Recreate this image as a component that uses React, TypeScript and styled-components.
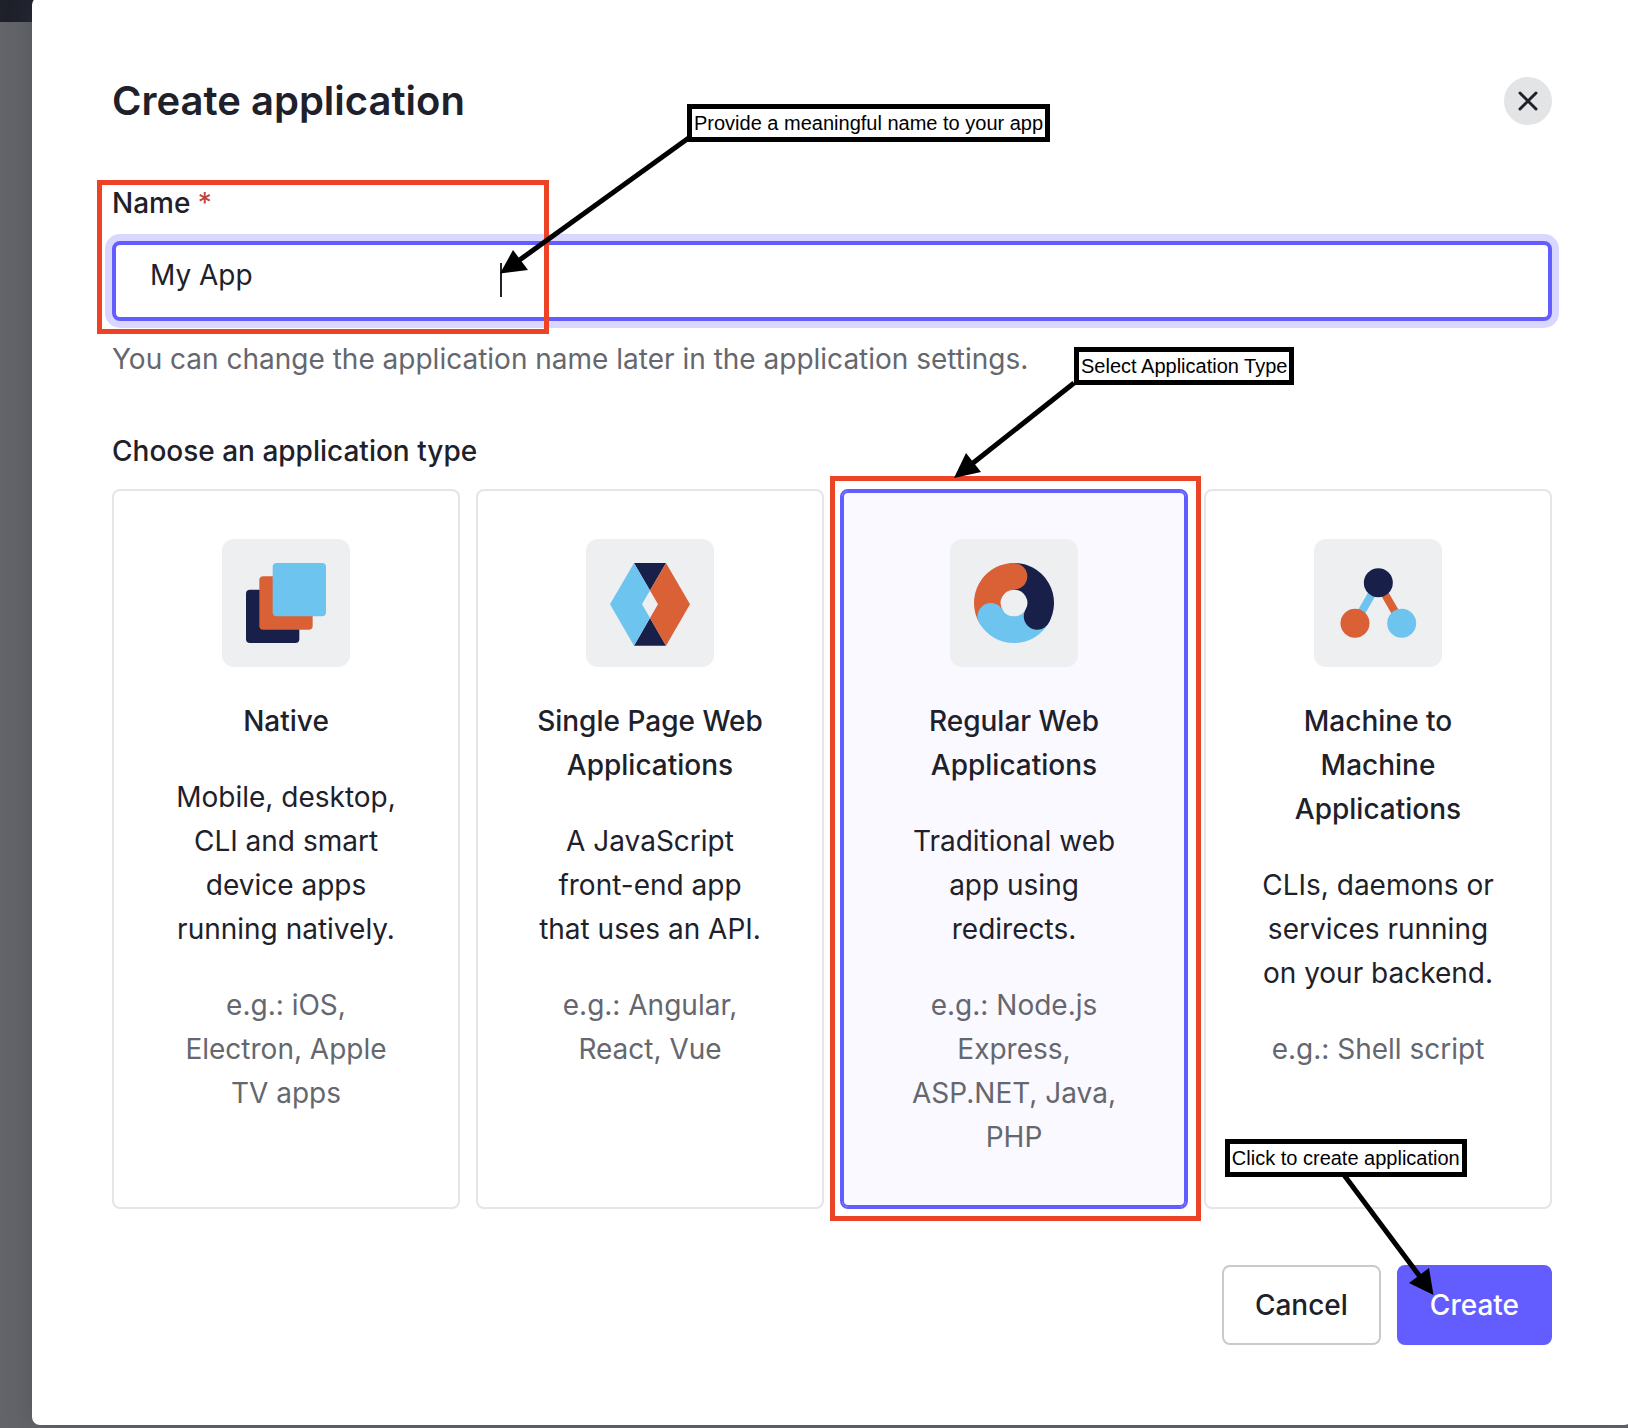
import { useId, useState } from "react";
import type { ReactNode } from "react";
import styled, { createGlobalStyle, css } from "styled-components";

const ink = "#1e212a";
const muted = "#65676e";
const primary = "#635dff";
const navy = "#18204a";
const orange = "#da6036";
const sky = "#6dc4ef";
const markRed = "#ec4226";

const GlobalStyle = createGlobalStyle`
  *, *::before, *::after { box-sizing: border-box; }
  body { margin: 0; background: #636469; }
  body, input, button {
    font-family: Inter, "Liberation Sans", sans-serif;
    font-size: 28px;
    line-height: 44px;
    font-optical-sizing: none;
    font-feature-settings: "calt" 0;
    color: ${ink};
  }
`;

const Page = styled.div`
  min-height: 100vh;
  padding: 0 0 3px 32px;
  overflow: hidden;
  background: linear-gradient(${ink} 22px, #636469 22px);
`;

const Dialog = styled.form`
  margin: -3px -4px 0 0;
  padding: 80px;
  border-radius: 8px;
  background: #fff;
  box-shadow: 0 0 24px rgba(60, 64, 80, 0.4);
`;

const Header = styled.header`
  display: flex;
  align-items: center;
  justify-content: space-between;
  height: 48px;
  margin-bottom: 56px;
`;

const Title = styled.h1`
  margin: 0;
  font-size: 40px;
  line-height: 48px;
  font-weight: 600;
`;

const CloseButton = styled.button`
  display: grid;
  place-items: center;
  width: 48px;
  height: 48px;
  padding: 0;
  border: 0;
  border-radius: 50%;
  background: #e3e4e6;
`;

const Field = styled.div`
  position: relative;
  display: flex;
  flex-direction: column;
  gap: 16px;
  margin-bottom: 48px;
`;

const FieldLabel = styled.label`
  font-weight: 500;
`;

const Required = styled.span`
  color: #c0433b;
  font-weight: 400;
`;

const TextInput = styled.input`
  width: 100%;
  height: 80px;
  padding: 0 32px 12px 34px;
  border: 4px solid ${primary};
  border-radius: 8px;
  outline: 0;
  background: #fff;
  box-shadow: 0 0 0 7px #d9d6ff;
`;

const Hint = styled.p`
  margin: 0;
  color: ${muted};
`;

const TypeGroup = styled.fieldset`
  min-width: 0;
  margin: 0 0 56px;
  padding: 0;
  border: 0;
`;

const Legend = styled.legend`
  padding: 0 0 16px;
  font-weight: 500;
`;

const TypeGrid = styled.div`
  display: grid;
  grid-template-columns: repeat(4, minmax(0, 1fr));
  gap: 16px;
`;

const TypeCard = styled.label<{ $selected: boolean }>`
  position: relative;
  display: flex;
  flex-direction: column;
  align-items: center;
  gap: 32px;
  padding: 48px 54px;
  border: 2px solid #e5e5e5;
  border-radius: 8px;
  text-align: center;
  ${({ $selected }) =>
    $selected &&
    css`
      border-color: ${primary};
      background: #faf9ff;
      box-shadow: inset 0 0 0 2px ${primary};
    `}
`;

const HiddenRadio = styled.input`
  position: absolute;
  width: 1px;
  height: 1px;
  margin: 0;
  opacity: 0;
`;

const IconTile = styled.span`
  display: block;
  width: 128px;
  height: 128px;
  border-radius: 12px;
  background: #eeeff1;
`;

const CardTitle = styled.span`
  font-weight: 500;
`;

const CardExamples = styled.span`
  color: ${muted};
`;

const Footer = styled.footer`
  display: flex;
  justify-content: flex-end;
  gap: 16px;
`;

const Button = styled.button<{ $primary?: boolean }>`
  height: 80px;
  padding: 0 31px;
  border: 2px solid ${({ $primary }) => ($primary ? primary : "#c9cace")};
  border-radius: 8px;
  background: ${({ $primary }) => ($primary ? primary : "#fff")};
  color: ${({ $primary }) => ($primary ? "#fff" : ink)};
  font-weight: 500;
`;

const ButtonAnchor = styled.div`
  position: relative;
`;

/* Tutorial notes drawn over the dialog */

const Frame = styled.span`
  position: absolute;
  border: 5px solid ${markRed};
  pointer-events: none;
`;

const NameFrame = styled(Frame)`
  top: -1px;
  left: -15px;
  width: 452px;
  height: 154px;
`;

const CardFrame = styled(Frame)`
  inset: -15px -15px -14px -12px;
`;

const Callout = styled.span<{ $left: number; $top: number }>`
  position: absolute;
  left: ${({ $left }) => $left}px;
  top: ${({ $top }) => $top}px;
  z-index: 2;
  padding: 0 2px;
  border: 5px solid #000;
  background: #fff;
  color: #000;
  font: 400 20px/28px "Liberation Sans", Arial, sans-serif;
  white-space: nowrap;
  pointer-events: none;
`;

const ArrowLayer = styled.svg<{ $left: number; $top: number }>`
  position: absolute;
  left: ${({ $left }) => $left}px;
  top: ${({ $top }) => $top}px;
  z-index: 1;
  overflow: visible;
  pointer-events: none;
`;

const Caret = styled.span`
  position: absolute;
  left: 388px;
  top: 82px;
  width: 2px;
  height: 34px;
  background: ${ink};
`;

type ArrowProps = { left: number; top: number; width: number; height: number; line: string; head: string };

function Arrow({ left, top, width, height, line, head }: ArrowProps) {
  return (
    <ArrowLayer $left={left} $top={top} width={width} height={height} aria-hidden="true">
      <path d={line} stroke="#000" strokeWidth="5" fill="none" />
      <path d={head} fill="#000" />
    </ArrowLayer>
  );
}

function NativeIcon() {
  return (
    <svg width="128" height="128" viewBox="0 0 128 128" aria-hidden="true">
      <rect x="24" y="50.67" width="53.33" height="53.33" rx="4" fill={navy} />
      <rect x="37.33" y="37.33" width="53.33" height="53.33" rx="4" fill={orange} />
      <rect x="50.67" y="24" width="53.33" height="53.33" rx="4" fill={sky} />
    </svg>
  );
}

function SinglePageIcon() {
  return (
    <svg width="128" height="128" viewBox="0 0 128 128" aria-hidden="true">
      <path d="M48 24H80L64 51.5ZM48 106.67H80L64 79Z" fill={navy} />
      <path d="M48 24L64 51.5L56 65.33L64 79L48 106.67L24 65.33Z" fill={sky} />
      <path d="M80 24L64 51.5L72 65.33L64 79L80 106.67L104 65.33Z" fill={orange} />
    </svg>
  );
}

function RegularWebIcon() {
  return (
    <svg width="128" height="128" viewBox="0 0 128 128" aria-hidden="true">
      <g fill="none" strokeWidth="26.67">
        <path d="M64 37.33A26.67 26.67 0 0 1 87.1 77.33" stroke={navy} />
        <path d="M87.1 77.33A26.67 26.67 0 0 1 40.9 77.33" stroke={sky} />
        <path d="M40.9 77.33A26.67 26.67 0 0 1 64 37.33" stroke={orange} />
      </g>
      <circle cx="64" cy="37.33" r="13.33" fill={orange} />
      <circle cx="87.1" cy="77.33" r="13.33" fill={navy} />
      <circle cx="40.9" cy="77.33" r="13.33" fill={sky} />
    </svg>
  );
}

function MachineIcon() {
  return (
    <svg width="128" height="128" viewBox="0 0 128 128" aria-hidden="true">
      <path d="M64.33 43.67L41 84.33" stroke={sky} strokeWidth="8" />
      <path d="M64.33 43.67L87.67 84.33" stroke={orange} strokeWidth="8" />
      <circle cx="64.33" cy="43.67" r="14.5" fill={navy} />
      <circle cx="41" cy="84.33" r="14.5" fill={orange} />
      <circle cx="87.67" cy="84.33" r="14.5" fill={sky} />
    </svg>
  );
}

type AppType = { id: string; title: string; description: string; examples: string; icon: ReactNode };

const appTypes: AppType[] = [
  {
    id: "native",
    title: "Native",
    description: "Mobile, desktop, CLI and smart device apps running natively.",
    examples: "e.g.: iOS, Electron, Apple TV apps",
    icon: <NativeIcon />,
  },
  {
    id: "spa",
    title: "Single Page Web Applications",
    description: "A JavaScript front-end app that uses an API.",
    examples: "e.g.: Angular, React, Vue",
    icon: <SinglePageIcon />,
  },
  {
    id: "regular_web",
    title: "Regular Web Applications",
    description: "Traditional web app using redirects.",
    examples: "e.g.: Node.js Express, ASP.NET, Java, PHP",
    icon: <RegularWebIcon />,
  },
  {
    id: "m2m",
    title: "Machine to Machine Applications",
    description: "CLIs, daemons or services running on your backend.",
    examples: "e.g.: Shell script",
    icon: <MachineIcon />,
  },
];

export default function App() {
  const nameId = useId();
  const [name, setName] = useState("My App");
  const [selected, setSelected] = useState("regular_web");

  return (
    <>
      <GlobalStyle />
      <Page>
        <Dialog role="dialog" aria-label="Create application" onSubmit={(e) => e.preventDefault()}>
          <Header>
            <Title>Create application</Title>
            <CloseButton type="button" aria-label="Close">
              <svg width="24" height="24" viewBox="0 0 24 24" aria-hidden="true">
                <path d="M4 4L20 20M20 4L4 20" stroke={ink} strokeWidth="3" strokeLinecap="round" />
              </svg>
            </CloseButton>
          </Header>

          <Field>
            <FieldLabel htmlFor={nameId}>
              Name <Required>*</Required>
            </FieldLabel>
            <TextInput id={nameId} value={name} onChange={(e) => setName(e.target.value)} />
            <Hint>You can change the application name later in the application settings.</Hint>
            <Caret />
            <NameFrame />
            <Arrow
              left={388}
              top={-42}
              width={188}
              height={136}
              line="M190 -2L14 125"
              head="M0 134.5L13 111L28 131Z"
            />
            <Callout $left={575} $top={-77}>Provide a meaningful name to your app</Callout>
            <Callout $left={962} $top={166}>Select Application Type</Callout>
          </Field>

          <TypeGroup>
            <Legend>Choose an application type</Legend>
            <TypeGrid>
              {appTypes.map((type) => (
                <TypeCard key={type.id} $selected={type.id === selected}>
                  <HiddenRadio
                    type="radio"
                    name="app-type"
                    value={type.id}
                    checked={type.id === selected}
                    onChange={() => setSelected(type.id)}
                  />
                  <IconTile>{type.icon}</IconTile>
                  <CardTitle>{type.title}</CardTitle>
                  <span>{type.description}</span>
                  <CardExamples>{type.examples}</CardExamples>
                  {type.id === "regular_web" && (
                    <>
                      <CardFrame />
                      <Arrow
                        left={112}
                        top={-108}
                        width={122}
                        height={96}
                        line="M120 0L14 84"
                        head="M0 95L12 70L27 89Z"
                      />
                    </>
                  )}
                </TypeCard>
              ))}
            </TypeGrid>
          </TypeGroup>

          <Footer>
            <Button type="button">Cancel</Button>
            <ButtonAnchor>
              <Button type="submit" $primary>
                Create
              </Button>
              <Arrow
                left={-53}
                top={-90}
                width={90}
                height={120}
                line="M0 0L80 107"
                head="M89.5 120L65 108L85 93Z"
              />
              <Callout $left={-172} $top={-126}>Click to create application</Callout>
            </ButtonAnchor>
          </Footer>
        </Dialog>
      </Page>
    </>
  );
}
